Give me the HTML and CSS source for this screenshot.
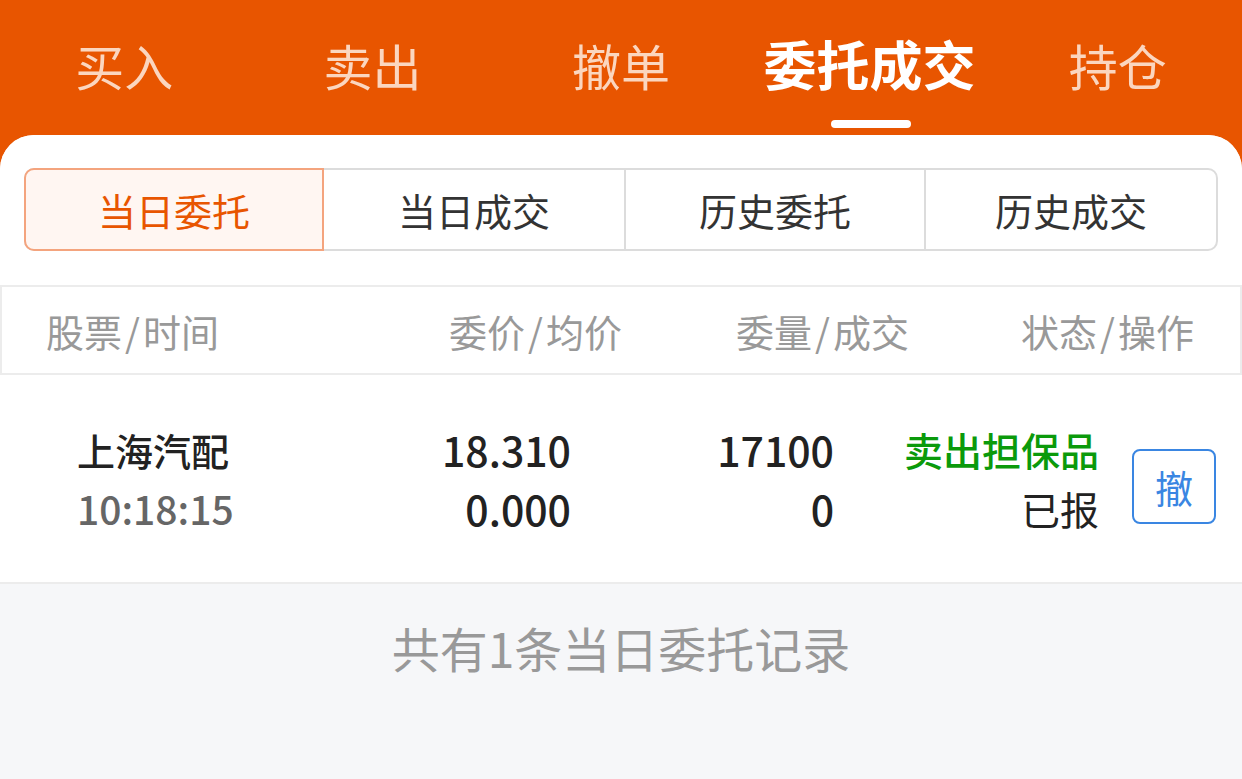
FILE: index.html
```html
<!DOCTYPE html>
<html lang="zh-CN">
<head>
<meta charset="utf-8">
<title>委托成交</title>
<link rel="stylesheet" href="styles.css">
</head>
<body>
<div class="page">
  <header class="topbar">
    <nav class="tabs">
      <div class="tab">买入</div>
      <div class="tab">卖出</div>
      <div class="tab">撤单</div>
      <div class="tab active">委托成交<span class="bar"></span></div>
      <div class="tab">持仓</div>
    </nav>
  </header>
  <main class="card">
    <div class="segwrap">
      <div class="seg">
        <div class="segitem on">当日委托</div>
        <div class="segitem">当日成交</div>
        <div class="segitem">历史委托</div>
        <div class="segitem">历史成交</div>
      </div>
    </div>
    <div class="thead">
      <div class="th c1">股票<span class="sl">/</span>时间</div>
      <div class="th c2">委价<span class="sl">/</span>均价</div>
      <div class="th c3">委量<span class="sl">/</span>成交</div>
      <div class="th c4">状态<span class="sl">/</span>操作</div>
    </div>
    <div class="trow">
      <div class="td d1">
        <div class="name">上海汽配</div>
        <div class="time">10:18:15</div>
      </div>
      <div class="td d2">
        <div class="num">18.310</div>
        <div class="num">0.000</div>
      </div>
      <div class="td d3">
        <div class="num">17100</div>
        <div class="num">0</div>
      </div>
      <div class="td d4">
        <div class="status">
          <div class="green">卖出担保品</div>
          <div class="dark">已报</div>
        </div>
        <button class="cancel">撤</button>
      </div>
    </div>
    <div class="foot">共有1条当日委托记录</div>
  </main>
</div>
</body>
</html>
```
FILE: styles.css
```css
* { box-sizing: border-box; margin: 0; padding: 0; }
html, body { width: 1242px; height: 779px; overflow: hidden; }
body {
  font-family: "Noto Sans CJK SC", "Noto Sans", sans-serif;
  background: #e85500;
}
.page { width: 1242px; height: 779px; display: flex; flex-direction: column; background: #e85500; }
.topbar { height: 135px; flex: none; }
.tabs { display: grid; grid-template-columns: repeat(5, 1fr); height: 135px; }
.tab {
  position: relative;
  display: flex; justify-content: center; align-items: flex-start;
  padding-top: 33px;
  font-size: 49px; line-height: 64px;
  color: #fbd6bf;
}
.tab.active { color: #fff; font-weight: 700; font-size: 53px; padding-top: 31px; }
.tab .bar {
  position: absolute; left: 50%; top: 120px; transform: translateX(-50%);
  margin-left: 2px;
  width: 80px; height: 8px; border-radius: 4px; background: #fff;
}
.card {
  flex: 1;
  background: #f6f7f9;
  border-radius: 34px 34px 0 0;
  overflow: hidden;
  display: flex; flex-direction: column;
}
.segwrap { background: #fff; padding: 33px 24px 34px 24px; }
.seg {
  display: grid; grid-template-columns: 298px 300px 300px 1fr;
  height: 83px;
  border: 2px solid #dcdcdc; border-radius: 10px;
}
.segitem {
  display: flex; align-items: center; justify-content: center;
  font-size: 38px; color: #333;
  border-left: 2px solid #dcdcdc;
}
.segitem:first-child { border-left: none; }
.segitem.on {
  margin: -2px 0 -2px -2px;
  border: 2px solid #f4a47e; border-radius: 10px 0 0 10px;
  background: #fff6f2; color: #e85500;
}
.segitem.on + .segitem { border-left: none; }
.thead {
  display: grid; grid-template-columns: 300px 274px 287px 1fr;
  height: 90px; padding: 0 46px;
  background: #fff;
  border: 2px solid #ececec;
  align-items: center;
}
.th { font-size: 38px; color: #999; }
.th .sl { margin: 0 3px; }
.c1 { text-align: left; margin-left: -2px; }
.c2, .c3, .c4 { text-align: right; }
.trow {
  display: grid;
  grid-template-columns: 571px 263px 1fr;
  height: 209px; padding: 0 26px 0 0;
  background: #fff;
  border-bottom: 2px solid #ececec;
  align-items: center;
}
.td { display: flex; flex-direction: column; }
.d1 { grid-column: 1; grid-row: 1; padding-left: 77px; }
.d2 { grid-column: 1; grid-row: 1; align-items: flex-end; }
.d3 { grid-column: 2; grid-row: 1; align-items: flex-end; }
.d4 { grid-column: 3; grid-row: 1; flex-direction: row; justify-content: flex-end; align-items: center; gap: 33px; }
.name { font-size: 38px; line-height: 59px; color: #222; font-weight: 500; }
.time { font-size: 39px; line-height: 59px; color: #666; font-weight: 500; }
.num { font-size: 41px; line-height: 59px; color: #222; font-weight: 500; }
.status { display: flex; flex-direction: column; align-items: flex-end; }
.green { font-size: 39px; line-height: 59px; color: #0b9a0b; font-weight: 500; }
.dark { font-size: 39px; line-height: 59px; color: #222; }
.cancel {
  width: 84px; height: 75px;
  border: 2px solid #3a86e2; border-radius: 8px; background: #fff;
  color: #3a86e2; font-family: inherit; font-size: 38px;
  display: flex; align-items: center; justify-content: center;
  margin-top: 16px;
}
.foot {
  text-align: center; font-size: 48px; color: #999;
  padding-top: 32px; line-height: 62px;
}
```
